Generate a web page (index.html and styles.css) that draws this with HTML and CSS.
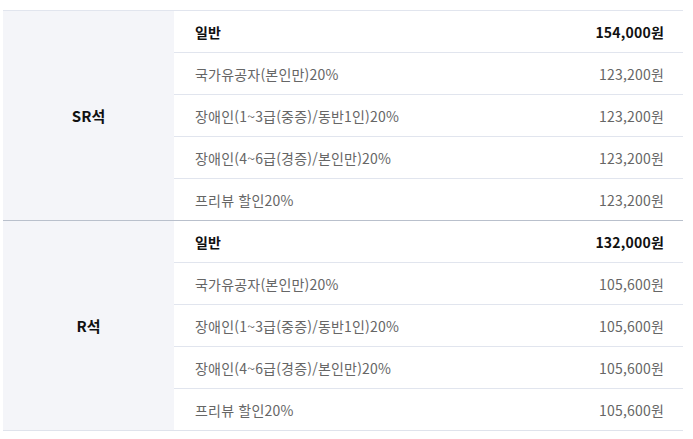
FILE: index.html
```html
<!DOCTYPE html>
<html lang="ko">
<head>
<meta charset="utf-8">
<link rel="stylesheet" href="styles.css">
</head>
<body>
<div class="wrap">
<table class="price">
<tbody class="grp">
<tr><th rowspan="5">SR석</th><td class="nm b">일반</td><td class="pr b">154,000원</td></tr>
<tr><td class="nm">국가유공자(본인만)20%</td><td class="pr">123,200원</td></tr>
<tr><td class="nm">장애인(1~3급(중증)/동반1인)20%</td><td class="pr">123,200원</td></tr>
<tr><td class="nm">장애인(4~6급(경증)/본인만)20%</td><td class="pr">123,200원</td></tr>
<tr class="last"><td class="nm">프리뷰 할인20%</td><td class="pr">123,200원</td></tr>
</tbody>
<tbody class="grp">
<tr><th rowspan="5">R석</th><td class="nm b">일반</td><td class="pr b">132,000원</td></tr>
<tr><td class="nm">국가유공자(본인만)20%</td><td class="pr">105,600원</td></tr>
<tr><td class="nm">장애인(1~3급(중증)/동반1인)20%</td><td class="pr">105,600원</td></tr>
<tr><td class="nm">장애인(4~6급(경증)/본인만)20%</td><td class="pr">105,600원</td></tr>
<tr class="last"><td class="nm">프리뷰 할인20%</td><td class="pr">105,600원</td></tr>
</tbody>
</table>
</div>
</body>
</html>
```
FILE: styles.css
```css
html, body {
  margin: 0;
  padding: 0;
  background: #fff;
}
.wrap {
  padding: 10px 10px 0 3px;
}
.price {
  width: 680px;
  border-collapse: collapse;
  border-top: 1px solid #e1e5ee;
  font-family: "Noto Sans CJK KR", "Noto Sans", sans-serif;
  font-size: 14px;
  color: #666;
}
.price th {
  width: 171px;
  background: #f4f5f9;
  color: #111;
  font-weight: 700;
  font-size: 15px;
  text-align: center;
  vertical-align: middle;
  padding: 0;
}
.grp:first-child tr.last td,
.grp:first-child th {
  border-bottom: 1px solid #b9c0cc;
}
.grp:last-child tr.last td,
.grp:last-child th {
  border-bottom: 1px solid #dfe3ec;
}
.price td {
  height: 41px;
  padding: 0;
  border-bottom: 1px solid #e1e5ee;
  letter-spacing: 0.2px;
}
.nm {
  padding-left: 21px !important;
  text-align: left;
}
.pr {
  padding-right: 19px !important;
  text-align: right;
}
.b {
  color: #111;
  font-weight: 700;
}
```
